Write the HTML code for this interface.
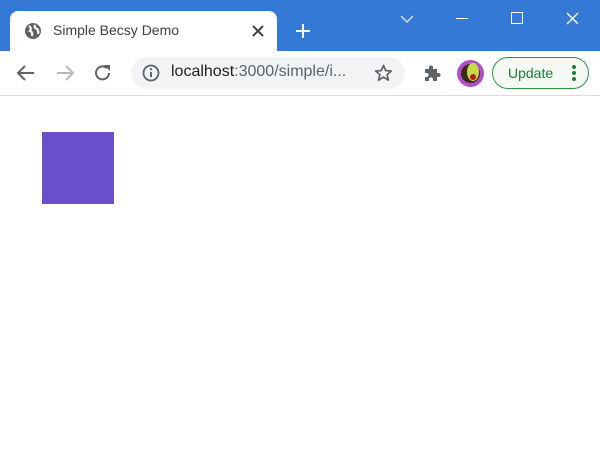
<!DOCTYPE html>
<html><head><style>
*{margin:0;padding:0;box-sizing:border-box}
body{width:600px;height:450px;overflow:hidden;background:#fff;font-family:"Liberation Sans",sans-serif;position:relative}
.abs{position:absolute}
</style></head><body>
<div class="abs" style="left:0;top:0;width:600px;height:51px;background:#3479d5"></div>
<div class="abs" style="left:10px;top:11px;width:267px;height:41px;background:#fff;border-radius:8px 8px 0 0"></div>
<svg class="abs" style="left:24px;top:22px" width="18" height="18" viewBox="0 0 18 18"><circle cx="9" cy="9" r="8" fill="#5f6368"/><path d="M5 4 Q8 6 6 9 Q9 10 8 14 M11 3 Q10 6 13 7 Q15 9 14 12" stroke="#fff" stroke-width="2.2" fill="none"/></svg>
<div class="abs" style="left:53px;top:22px;font-size:14px;color:#3c4043">Simple Becsy Demo</div>
<svg class="abs" style="left:252px;top:25px" width="12" height="12"><path d="M1 1L11 11M11 1L1 11" stroke="#3c4043" stroke-width="2"/></svg>
<svg class="abs" style="left:295px;top:23px" width="16" height="16"><path d="M8 1V15M1 8H15" stroke="#fff" stroke-width="2"/></svg>
<svg class="abs" style="left:400px;top:14px" width="14" height="10"><path d="M1 2L7 8L13 2" stroke="#dbe6f7" stroke-width="1.3" fill="none"/></svg>
<div class="abs" style="left:456px;top:18px;width:12px;height:1.3px;background:#fff"></div>
<div class="abs" style="left:511px;top:12px;width:12px;height:12px;border:1.3px solid #fff"></div>
<svg class="abs" style="left:566px;top:12px" width="13" height="13"><path d="M1 1L12 12M12 1L1 12" stroke="#fff" stroke-width="1.4"/></svg>
<div class="abs" style="left:0;top:95px;width:600px;height:1px;background:#dadce0"></div>
<svg class="abs" style="left:16px;top:64px" width="20" height="18"><path d="M18 9H3M9 2L2 9L9 16" stroke="#5f6368" stroke-width="2" fill="none"/></svg>
<svg class="abs" style="left:55px;top:64px" width="20" height="18"><path d="M2 9H17M11 2L18 9L11 16" stroke="#b4b6b8" stroke-width="2" fill="none"/></svg>
<svg class="abs" style="left:93px;top:63px" width="20" height="20"><path d="M16 10A6.5 6.5 0 1 1 14 5.2" stroke="#5f6368" stroke-width="2" fill="none"/><path d="M11 2H17V8Z" fill="#5f6368"/></svg>
<div class="abs" style="left:131px;top:57px;width:274px;height:32px;background:#f1f3f4;border-radius:16px"></div>
<svg class="abs" style="left:142px;top:64px" width="18" height="18"><circle cx="9" cy="9" r="7.5" stroke="#5f6368" stroke-width="1.8" fill="none"/><path d="M9 8V13" stroke="#5f6368" stroke-width="2"/><circle cx="9" cy="5.3" r="1.2" fill="#5f6368"/></svg>
<div class="abs" style="left:171px;top:63px;font-size:16px;color:#5f6368;white-space:nowrap"><span style="color:#202124">localhost</span>:3000/simple/i...</div>
<svg class="abs" style="left:374px;top:64px" width="19" height="18" viewBox="0 0 20 19"><path d="M10 1.5L12.4 7L18.3 7.4L13.8 11.2L15.2 17L10 13.9L4.8 17L6.2 11.2L1.7 7.4L7.6 7Z" stroke="#5f6368" stroke-width="1.8" fill="none" stroke-linejoin="round"/></svg>
<svg class="abs" style="left:423px;top:64px" width="19" height="19"><path d="M2 5H6V3.5A2 2 0 0 1 10 3.5V5H14V9H15.5A2 2 0 0 1 15.5 13H14V17H10V15.5A2 2 0 0 0 6 15.5V17H2V13H3.5A2 2 0 0 0 3.5 9H2Z" fill="#5f6368"/></svg>
<div class="abs" style="left:457px;top:60px;width:27px;height:27px;border-radius:50%;background:#b24fc8"></div>
<div class="abs" style="left:461px;top:64px;width:19px;height:19px;border-radius:50%;background:#3a2a1a"></div>
<div class="abs" style="left:467px;top:63px;width:12px;height:18px;border-radius:50%;background:#c8d94c"></div>
<div class="abs" style="left:470px;top:74px;width:6px;height:6px;border-radius:50%;background:#b31e0c"></div>
<div class="abs" style="left:492px;top:57px;width:97px;height:32px;border:1.5px solid #2f9444;border-radius:16px;background:#f4f9f5"></div>
<div class="abs" style="left:508px;top:65px;font-size:14px;color:#1e7e34">Update</div>
<div class="abs" style="left:572px;top:65px;width:4px;height:4px;border-radius:50%;background:#1e7e34;box-shadow:0 6px 0 #1e7e34,0 12px 0 #1e7e34"></div>
<div class="abs" style="left:42px;top:132px;width:72px;height:72px;background:#6a4fcb"></div>
</body></html>
